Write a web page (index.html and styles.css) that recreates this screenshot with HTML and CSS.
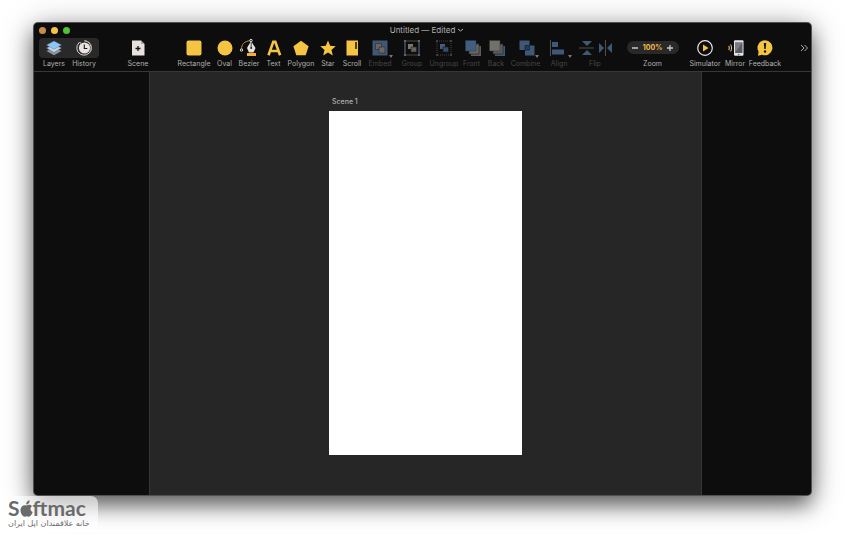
FILE: index.html
```html
<!DOCTYPE html>
<html lang="en">
<head>
<meta charset="utf-8">
<title>Untitled</title>
<link rel="stylesheet" href="styles.css">
</head>
<body>
<main class="window">
  <header class="chrome">
    <div class="titlebar">
      <div class="lights">
        <button class="light close" aria-label="Close"></button>
        <button class="light minimize" aria-label="Minimize"></button>
        <button class="light expand" aria-label="Full screen"></button>
      </div>
      <button class="title">Untitled — Edited
        <svg width="7" height="6" viewBox="0 0 7 6"><path d="M1 2l2.500 2L6 2" fill="none" stroke="currentColor"/></svg>
      </button>
    </div>
    <nav class="toolbar" aria-label="Tools">
      <div class="segments">
        <button class="tool w30"><svg viewBox="0 0 20 20"><path d="M2.500 13l7.500-3.500 7.500 3.500-7.500 4.300z" fill="#8d969f"/><path d="M2.500 10l7.500-3.500 7.500 3.500-7.500 4.500z" fill="#c5d6e8" stroke="#55616d" stroke-width=".5"/><path d="M2.500 7L10 3l7.500 4-7.500 4.200z" fill="#8fc6fa" stroke="#55616d" stroke-width=".4"/></svg>Layers</button>
        <button class="tool w30"><svg viewBox="0 0 20 20"><circle cx="10.500" cy="10" r="5.600" fill="#e9e2de"/><path d="M5 4.800a7.200 7.200 0 1 0 5.500-2" fill="none" stroke="#ddd7d3" stroke-width="1"/><path d="M10.500 2.800a7.200 7.200 0 0 1 5 12.300" fill="none" stroke="#aaa5a2" stroke-width="1"/><path d="M4.500 4.500h2.300v2" fill="none" stroke="#ddd7d3" stroke-width=".6"/><path d="M10.300 6.500v4h3" fill="none" stroke="#171717" stroke-width="1.100"/></svg>History</button>
      </div>
      <button class="tool scene-tool"><svg viewBox="0 0 20 20"><path d="M4 2.500h9l3.500 3.500v11.500H4z" fill="#e8e1dd"/><path d="M13 2.500V6h3.500z" fill="#aaa39f"/><path d="M7.500 10.500h5M10 8v5" stroke="#151515" stroke-width="1.300"/></svg>Scene</button>

      <button class="tool w40"><svg viewBox="0 0 20 20"><rect x="2.500" y="2.500" width="15" height="15" rx="2" fill="#f6c443"/></svg>Rectangle</button>
      <button class="tool w21"><svg viewBox="0 0 20 20"><circle cx="10" cy="10" r="7.500" fill="#f6c443"/></svg>Oval</button>
      <button class="tool w28"><svg viewBox="0 0 20 20"><path d="M2.500 11.500C2.500 6 5 3.500 11.500 2.500" fill="none" stroke="#bd8c3e"/><circle cx="2.500" cy="12" r="1.200" fill="#111" stroke="#e9e2de"/><path d="M12 3L8 10l2 4.500h4.500L16.500 10z" fill="#e9e2de"/><path d="M12.200 4v6" stroke="#222" stroke-width=".8"/><circle cx="12.200" cy="10" r="1" fill="#222"/><circle cx="12" cy="2.500" r="1.200" fill="#111" stroke="#e9e2de"/><path d="M8 15h9v3H8z" fill="#f3ad3d"/></svg>Bezier</button>
      <button class="tool w21"><svg viewBox="0 0 20 20"><path d="M4.500 17.300L9.300 3.700h2l4.800 13.600M6.500 13h7.500" fill="none" stroke="#f6c443" stroke-width="2.600"/></svg>Text</button>
      <button class="tool w34"><svg viewBox="0 0 20 20"><path d="M10 2.800l7.600 5.500-2.900 9H5.300l-2.900-9z" fill="#f6c443"/></svg>Polygon</button>
      <button class="tool w20"><svg viewBox="0 0 20 20"><path d="M10 2.500l2.200 5.200 5.500.5-4.200 3.700 1.300 5.500-4.800-2.900-4.800 2.900 1.300-5.500-4.200-3.700 5.500-.5z" fill="#f6c443"/></svg>Star</button>
      <button class="tool w28"><svg viewBox="0 0 20 20"><path d="M4.500 2.500h11.500v15H4.500z" fill="#f6c443"/><path d="M14 4v7" stroke="#19150c" stroke-width="1.500"/></svg>Scroll</button>
      <button class="tool w28 off"><svg viewBox="0 0 20 20"><path d="M2.500 2.500h15v15h-15z" fill="#3f5878"/><path d="M5.500 5.500h6v6h-6z" fill="#686663" stroke="#302f2e" stroke-width=".7"/><path d="M9 9h6v6H9z" fill="#6b6966" stroke="#302f2e" stroke-width=".7"/></svg><i class="drop"></i>Embed</button>
      <button class="tool w36 off"><svg viewBox="0 0 20 20"><path d="M3 3h14v14H3z" fill="none" stroke="#4a4a4a"/><path d="M3 3v14M17 3v14" stroke="#3f5878"/><path d="M6 6h5v5H6z" fill="#7b7873"/><path d="M9 9h5.500v5H9z" fill="#65635e" stroke="#272727" stroke-width=".7"/><path d="M2 2h2v2H2zM16 2h2v2h-2zM2 16h2v2H2zM16 16h2v2h-2z" fill="#646464"/></svg>Group</button>
      <button class="tool w28 off"><svg viewBox="0 0 20 20"><path d="M3 3h14v14H3z" fill="none" stroke="#444" stroke-dasharray="1 1"/><path d="M6 6h5v5H6z" fill="#455d80"/><path d="M9 9h5.500v5H9z" fill="#354c6a" stroke="#161b22" stroke-width=".7"/><path d="M2 2h2v2H2zM16 2h2v2h-2zM2 16h2v2H2zM16 16h2v2h-2z" fill="#3e3e3e"/></svg>Ungroup</button>
      <button class="tool w27 off"><svg viewBox="0 0 20 20"><path d="M9 8h10v10H9z" fill="#5e5c58"/><path d="M7 6h10v10H7z" fill="#696762" stroke="#25282c" stroke-width=".7"/><path d="M3.500 2.500H14V13H3.500z" fill="#435d7e" stroke="#243b56" stroke-width=".5"/></svg>Front</button>
      <button class="tool w22 off"><svg viewBox="0 0 20 20"><path d="M9 8h10v10H9z" fill="#3f5878"/><path d="M7 6h10v10H7z" fill="#5e5c58" stroke="#222" stroke-width=".7"/><path d="M3.500 2.500H14V13H3.500z" fill="#72706b" stroke="#353431" stroke-width=".5"/></svg>Back</button>
      <button class="tool w37 off"><svg viewBox="0 0 20 20"><path d="M3.500 2.500h10V12h-10z" fill="#3f5878"/><path d="M9 7.500h9.500v10H9z" fill="#3f5878"/><path d="M9 7.500h4.500V12H9z" fill="#263c56" stroke="#17222f" stroke-width=".8"/></svg><i class="drop"></i>Combine</button>
      <button class="tool w30 off"><svg viewBox="0 0 20 20"><path d="M1.500 2v16" stroke="#505050"/><path d="M3 4h6v5H3zM3 11.500h12v5H3z" fill="#3f5878"/></svg><i class="drop"></i>Align</button>
      <button class="tool w42 off"><svg class="wide" viewBox="0 0 36 20"><path d="M2 10h15M28.500 2v16" stroke="#505050"/><path d="M5 3h10l-5 5zM5 17h10l-5-5zM22 5v10l5-5zM35 5v10l-5-5z" fill="#3f5878"/></svg>Flip</button>
      <div class="zoom" role="group" aria-label="Zoom level">
        <div class="pill"><button aria-label="Zoom out"><svg width="6" height="6" viewBox="0 0 6 6"><path d="M0 3h6" stroke="currentColor" stroke-width="1.300"/></svg></button><output>100%</output><button aria-label="Zoom in"><svg width="6" height="6" viewBox="0 0 6 6"><path d="M0 3h6M3 0v6" stroke="currentColor" stroke-width="1.300"/></svg></button></div>
        <span>Zoom</span>
      </div>
      <button class="tool w32"><svg viewBox="0 0 20 20"><circle cx="10" cy="10" r="7.300" fill="none" stroke="#eee7e3" stroke-width="1.200"/><path d="M8 6.500l5.500 3.500L8 13.500z" fill="#f6c443"/></svg>Simulator</button>
      <button class="tool w28"><svg viewBox="0 0 20 20"><rect x="9" y="2.300" width="9.500" height="15.500" rx="1" fill="#e6e4e3"/><path d="M10 4.500h7.500v10.500H10z" fill="#565a61"/><path d="M10 15V4.500h7.500z" fill="#777b82"/><circle cx="13.700" cy="16.500" r=".7" fill="#555"/><path d="M5.700 6.500q2 3.500 0 7" fill="none" stroke="#d8ccb8"/><path d="M3.700 7.800q1.500 2.200 0 4.400" fill="none" stroke="#e5ae40" stroke-width="1.200"/></svg>Mirror</button>
      <button class="tool w32"><svg viewBox="0 0 20 20"><path d="M10 2.300a7.500 7.500 0 1 1-3 14.400L3 17.700l.6-4A7.500 7.500 0 0 1 10 2.300z" fill="#f6c443"/><path d="M8.800 5h2.400l-.5 6H9.300z" fill="#17130a"/><circle cx="10" cy="13.500" r="1.200" fill="#17130a"/></svg>Feedback</button>
      <button class="more" aria-label="More tools"><svg width="8" height="8" viewBox="0 0 8 8"><path d="M1 1l3 3-3 3M4.500 1l3 3-3 3" fill="none" stroke="currentColor"/></svg></button>
    </nav>
  </header>
  <div class="workspace">
    <aside class="layers" aria-label="Layers"></aside>
    <section class="canvas">
      <div class="scene">
        <h1>Scene 1</h1>
        <div class="artboard"></div>
      </div>
    </section>
    <aside class="inspector" aria-label="Inspector"></aside>
  </div>
</main>
<div class="watermark">
  <div class="brand"><span>S</span><svg width="13" height="17" viewBox="0 0 13 17"><path d="M6.500 5.500c1.500-.8 4-1.200 5.500.8-2.200 1.300-1.900 4.700.7 5.700-.9 2.700-2.500 5-4.200 4.700-1-.3-1.800-.7-3 0C3.200 17.500.5 13.800.5 10.300c0-4 3.200-6 6-4.800z" fill="currentColor"/><path d="M6.200 4.600C6 2.400 7.500.6 9.700.3c.2 2.200-1.400 4.200-3.500 4.300z" fill="currentColor"/></svg><span>ftmac</span></div>
  <div class="tagline" lang="fa" dir="rtl">خانه علاقمندان اپل ایران</div>
</div>
</body>
</html>
```
FILE: styles.css
```css
* { box-sizing: border-box; }
body {
  margin: 0;
  background: #fff;
  color: #b0b0b0;
  font: 7px/8px Inter, "Liberation Sans", sans-serif;
}
button {
  padding: 0;
  border: 0;
  background: none;
  color: inherit;
  font: inherit;
}
h1 { margin: 0; }
svg { flex: none; }

.window {
  display: flex;
  flex-direction: column;
  min-height: calc(100vh - 68px);
  margin: 23px 34px 45px;
  border-radius: 4px;
  overflow: hidden;
  background: #0d0d0d;
  box-shadow: 0 0 0 1px #505050, 0 10px 20px rgba(0, 0, 0, .5), 0 4px 32px rgba(0, 0, 0, .35);
}
.chrome {
  height: 49px;
  border-bottom: 1px solid #393637;
}
.titlebar {
  display: grid;
  grid-template-columns: 1fr auto 1fr;
  align-items: center;
  height: 14px;
}
.lights {
  display: flex;
  gap: 5px;
  padding-left: 5px;
}
.light {
  width: 7px;
  height: 7px;
  border-radius: 50%;
}
.close { background: #c98e45; }
.minimize { background: #f5c344; }
.expand { background: #50c233; }
.title {
  display: flex;
  align-items: center;
  gap: 2px;
  padding-left: 9px;
  font-size: 8px;
  line-height: 10px;
}

.toolbar {
  display: flex;
  align-items: flex-start;
  padding: 1px 0 0 5px;
}
.segments {
  display: flex;
  height: 20px;
  border-radius: 4px;
  background: #292929;
}
.tool {
  display: flex;
  position: relative;
  flex: none;
  flex-direction: column;
  align-items: center;
  gap: 2px;
  white-space: nowrap;
}
.tool svg {
  width: 20px;
  height: 20px;
}
.tool .wide { width: 36px; }
.off { color: #474747; }
.drop {
  position: absolute;
  top: 17px;
  left: calc(50% + 9px);
  border: 2px solid transparent;
  border-top: 3px solid #777;
  border-bottom: 0;
}
.scene-tool {
  width: 40px;
  margin: 0 16px 0 19px;
}
.w20 { width: 20px; }
.w21 { width: 21px; }
.w22 { width: 22px; }
.w27 { width: 27px; }
.w28 { width: 28px; }
.w30 { width: 30px; }
.w32 { width: 32px; }
.w34 { width: 34px; }
.w36 { width: 36px; }
.w37 { width: 37px; }
.w40 { width: 40px; }
.w42 { width: 42px; }

.zoom {
  display: flex;
  flex-direction: column;
  align-items: center;
  gap: 6px;
  width: 73px;
  padding-top: 3px;
}
.pill {
  display: flex;
  align-items: center;
  justify-content: space-between;
  width: 52px;
  height: 13px;
  padding: 0 5px;
  border-radius: 7px;
  background: #292929;
}
.pill button {
  display: flex;
  color: #c9c9c9;
}
.pill output {
  color: #f6bd43;
  font-weight: 700;
}
.more {
  display: flex;
  margin: 6px 3px 0 auto;
}

.workspace {
  display: flex;
  flex: 1;
}
.layers { width: 115px; }
.inspector { width: 109px; }
.canvas {
  display: flex;
  flex: 1;
  justify-content: center;
  padding: 25px 0 40px;
  border: solid #363636;
  border-width: 0 1px;
  background: #262626;
}
.scene { width: 193px; }
.scene h1 {
  padding-left: 3px;
  font-size: 7px;
  font-weight: 500;
  line-height: 10px;
}
.artboard {
  margin-top: 4px;
  aspect-ratio: 193 / 344;
  background: #fff;
}

.watermark {
  position: absolute;
  bottom: 8px;
  left: 0;
  padding: 2px 8px 2px;
  border-radius: 0 7px 0 0;
  background: rgba(255, 255, 255, .6);
  color: #6b6b6b;
}
.brand {
  display: flex;
  align-items: center;
  height: 20px;
  font: 700 21px/20px Lato, sans-serif;
}
.tagline {
  font: 400 8px/12px "DejaVu Sans", sans-serif;
  white-space: nowrap;
}
```
